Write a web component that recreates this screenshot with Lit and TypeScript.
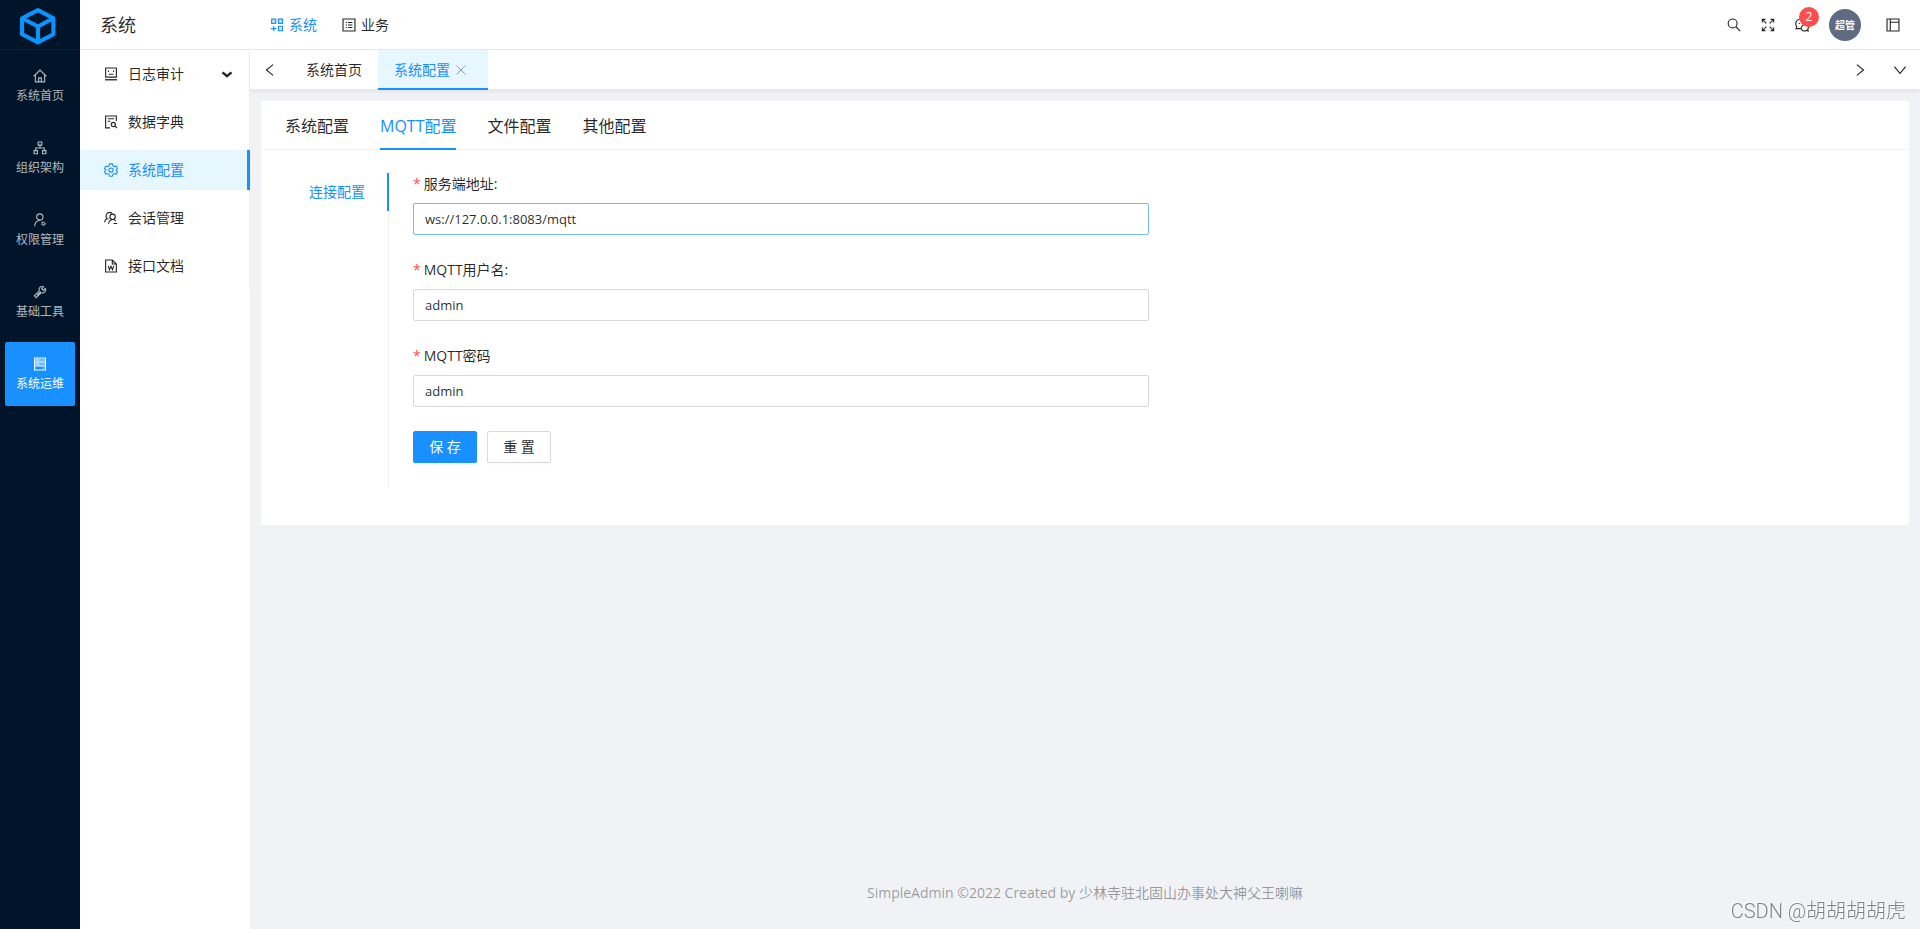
import { LitElement, html, css, svg } from "lit";
import { customElement, property } from "lit/decorators.js";

type Shape = ReturnType<typeof svg>;

// Glyphs live on a 1024 grid, stroked unless a part sets its own fill.
const shapes: Record<string, Shape> = {
  home: svg`<path d="M90 530L512 110l422 420M200 430v474h624V430M420 904V640h184v264"/>`,
  cluster: svg`<path d="M390 110h244v210H390zM110 690h230v210H110zM684 690h230v210H684zM512 320v190M225 690V510h574v180"/>`,
  userSetting: svg`<circle cx="500" cy="310" r="210"/><path d="M150 930c10-210 140-370 350-400"/><circle cx="740" cy="760" r="100" stroke-width="110" stroke-dasharray="70 35"/>`,
  tool: svg`<path d="M865 275L740 400l-115-115 125-125c-120-60-280 20-300 160-5 45 0 80 15 115L130 770l125 125 335-335c150 60 330-60 310-210-3-30-15-55-35-75zM310 740L560 490"/>`,
  server: svg`<path d="M150 110h724v804H150zM150 375h724M150 650h724"/><path d="M190 150h644v190H190zM190 415h644v200H190z" fill="currentColor" fill-opacity=".4" stroke="none"/><path d="M270 245h190M270 510h190M680 785h70"/>`,
  robot: svg`<path d="M150 110h724v610H150z"/><path d="M110 900h804" stroke-width="90"/><path d="M340 270v110M684 270v110M350 530h324"/>`,
  fileSearch: svg`<path d="M450 910H150V110h724v330M290 290h440M290 460h180"/><circle cx="670" cy="680" r="140"/><path d="M770 780l150 150"/>`,
  setting: svg`<path d="M420 100h184l35 125 95 55 126-32 92 160-91 93v30l91 93-92 160-126-32-95 55-35 125H420l-35-125-95-55-126 32-92-160 91-93v-30l-91-93 92-160 126 32 95-55z"/><circle cx="512" cy="518" r="140"/>`,
  team: svg`<circle cx="620" cy="430" r="180"/><path d="M350 900c10-150 110-260 270-290M700 590l140 130M680 880h250M230 540C120 400 180 140 410 130c90 0 150 30 190 80M80 800c10-120 70-210 180-250l90 30"/>`,
  fileWord: svg`<path d="M600 110H150v804h724V380zM600 110v270h274"/><path d="M330 500l80 260 102-230 102 230 80-260"/>`,
  appAdd: svg`<path d="M150 120h280v280H150zM610 120h280v280H610zM610 600h280v300H610z" fill="currentColor" fill-opacity=".25"/><path d="M290 580v350M110 755h360"/>`,
  profile: svg`<path d="M110 110h804v804H110z"/><path d="M290 340h80M440 340h300M290 510h80M440 510h300M290 680h80M440 680h300"/>`,
  left: svg`<path d="M720 150L270 512l450 362"/>`,
  right: svg`<path d="M300 150l450 362-450 362"/>`,
  down: svg`<path d="M130 290l382 450 382-450"/>`,
  chevron: svg`<path d="M210 400l302 260 302-260" stroke-width="170"/>`,
  close: svg`<path d="M160 160l704 704M864 160L160 864"/>`,
  search: svg`<circle cx="420" cy="410" r="300"/><path d="M640 630l290 290"/>`,
  expand: svg`<path d="M400 400L150 150M130 340V130h210M624 400l250-250M684 130h210v210M400 624L150 874M130 684v210h210M624 624l250 250M894 684v210H684"/>`,
  message: svg`<path d="M450 740c-60 20-120 20-180 0l-160 30 40-150C10 380 140 120 430 110c230 0 380 150 400 350M330 370v80M530 370v80M450 740c40-160 150-270 300-260 170 10 240 190 150 310l30 120-130-30c-150 80-320 20-350-140z"/>`,
  layout: svg`<path d="M110 110h804v804H110zM330 110v804M330 330h584"/>`,
};

@customElement("app-icon")
export class AppIcon extends LitElement {
  static styles = css`
    :host { display: inline-flex; flex: none; }
    svg { width: var(--icon-size, 14px); height: var(--icon-size, 14px); display: block; }
  `;
  @property() name = "";
  render() {
    return html`<svg viewBox="40 40 944 944" fill="none" stroke="currentColor" stroke-width="76" aria-hidden="true">${shapes[this.name]}</svg>`;
  }
}

@customElement("app-root")
export class AppRoot extends LitElement {
  static styles = css`
    :host {
      display: block;
      font: 14px/22px "Open Sans", "Noto Sans CJK SC", sans-serif;
      color: rgba(0, 0, 0, 0.85);
      --blue: #1890ff;
      --pale: #e6f7ff;
      --line: #f0f0f0;
    }
    * { box-sizing: border-box; }
    a { color: inherit; text-decoration: none; }
    button { font: inherit; color: inherit; background: none; border: 0; padding: 0; cursor: pointer; display: inline-flex; align-items: center; justify-content: center; }
    .shell { display: flex; min-height: 100vh; }
    .rail { flex: none; width: 80px; background: #001529; color: rgba(255, 255, 255, 0.7); }
    .logo { height: 50px; display: flex; align-items: center; padding: 2px 0 0 19px; border-bottom: 1px solid #0d2135; }
    .logo svg { width: 38px; height: 38px; }
    .rail-list { display: flex; flex-direction: column; gap: 8px; padding: 4px 5px; }
    .rail-item { height: 64px; display: flex; flex-direction: column; align-items: center; justify-content: center; gap: 4px; padding-top: 2px; font-size: 12px; line-height: 18px; border-radius: 2px; }
    .rail-item.active { background: var(--blue); color: #fff; }
    .right { flex: 1; min-width: 0; display: flex; flex-direction: column; }
    .header { height: 50px; display: flex; align-items: center; background: #fff; border-bottom: 1px solid #e8e8e8; }
    .title { width: 170px; padding-left: 20px; font-size: 18px; line-height: 28px; font-weight: 400; margin: 0; }
    .top-menu { display: flex; gap: 25px; padding-left: 20px; flex: 1; }
    .top-menu a { display: flex; align-items: center; gap: 5px; }
    .active-text { color: var(--blue); }
    .tools { display: flex; align-items: center; gap: 20px; padding-right: 20px; }
    .bell { position: relative; }
    .badge { position: absolute; left: 4px; top: -11px; width: 20px; height: 20px; border-radius: 10px; background: #ff4d4f; color: #fff; font-size: 12px; line-height: 20px; text-align: center; }
    .avatar { width: 32px; height: 32px; border-radius: 50%; background: #5f6b80; color: #fff; font-size: 10px; line-height: 32px; font-weight: 700; text-align: center; }
    .avatar-box { display: flex; padding-right: 5px; }
    .below { flex: 1; display: flex; min-height: 0; }
    .side { flex: none; width: 170px; background: #fff; }
    .side-list { display: flex; flex-direction: column; gap: 8px; padding: 4px 0; border-right: 1px solid var(--line); }
    .side-list .side-item { height: 40px; display: flex; align-items: center; gap: 10px; padding: 0 15px 0 24px; }
    .side-item .label { flex: 1; }
    .side-item.active { background: var(--pale); color: var(--blue); border-right: 3px solid var(--blue); margin-right: -1px; }
    .main { flex: 1; min-width: 0; display: flex; flex-direction: column; background: #f0f2f5; }
    .tabs { height: 40px; display: flex; align-items: stretch; background: #fff; border-bottom: 1px solid #e8e8e8; box-shadow: 0 2px 4px rgba(0, 21, 41, 0.06); }
    .tabs .arrow { width: 40px; }
    .tab { display: flex; align-items: center; gap: 5px; padding: 0 16px; height: 40px; color: inherit; }
    .tab.active { background: var(--pale); color: var(--blue); border-bottom: 2px solid var(--blue); padding: 2px 21px 0 16px; }
    .tab .close { color: #8c9aa3; --icon-size: 12px; }
    .grow { flex: 1; }
    .card { margin: 11px; background: #fff; border-radius: 2px; padding-bottom: 38px; }
    .card-tabs { display: flex; gap: 31px; padding: 0 24px; border-bottom: 1px solid var(--line); font-size: 16px; line-height: 24px; }
    .card-tabs a { padding: 13px 0 0; height: 49px; margin-bottom: -1px; }
    .card-tabs .active { color: var(--blue); border-bottom: 2px solid var(--blue); }
    .panel { display: flex; padding: 23px 24px 0; }
    .v-tabs { display: flex; flex-direction: column; margin-right: -1px; }
    .v-tabs a { padding: 8px 22px 8px 24px; color: var(--blue); border-right: 2px solid var(--blue); position: relative; }
    .form { flex: 1; border-left: 1px solid var(--line); padding: 0 0 24px 24px; }
    .field { display: flex; flex-direction: column; gap: 8px; width: 50%; margin-bottom: 24px; }
    .field label { line-height: 22px; }
    .req { color: #ff4d4f; padding-right: 3px; }
    .field input { height: 32px; width: 100%; border: 1px solid #d9d9d9; border-radius: 2px; padding: 0 11px; font: inherit; font-size: 13px; color: inherit; outline: none; background: #fff; }
    .field input.hot { border-color: #74b9f2; }
    .actions { display: flex; gap: 10px; }
    .btn { width: 64px; height: 32px; border: 1px solid #d9d9d9; border-radius: 2px; box-shadow: 0 2px 0 rgba(0, 0, 0, 0.02); }
    .btn.primary { background: var(--blue); border-color: var(--blue); color: #fff; }
    .footer { margin-top: auto; padding: 24px 50px 25px; text-align: center; color: rgba(0, 0, 0, 0.38); }
    .mark { position: fixed; right: 14px; bottom: 4px; font: 20px/28px Roboto, "Noto Sans CJK SC", sans-serif; font-weight: 300; color: #808184; text-shadow: -1px -1px 0 #fff; }
  `;

  private rail = [
    ["home", "系统首页"], ["cluster", "组织架构"], ["userSetting", "权限管理"], ["tool", "基础工具"], ["server", "系统运维"],
  ];
  private side = [
    ["robot", "日志审计"], ["fileSearch", "数据字典"], ["setting", "系统配置"], ["team", "会话管理"], ["fileWord", "接口文档"],
  ];
  private fields = [
    ["url", "服务端地址:", "ws://127.0.0.1:8083/mqtt"], ["user", "MQTT用户名:", "admin"], ["pass", "MQTT密码", "admin"],
  ];

  render() {
    return html`
      <div class="shell">
        <nav class="rail" aria-label="模块">
          <div class="logo">
            <svg viewBox="0 0 37 37" fill="none" stroke="#0a94ff" stroke-width="4" stroke-linejoin="round" aria-hidden="true">
              <path d="M18.500 3L33.500 11v15.500L18.500 34.500 3 26.500V11zM3 11l15.500 8L33.500 11M18.500 19V34"/>
            </svg>
          </div>
          <div class="rail-list">
            ${this.rail.map(([icon, text], i) => html`<a href="#" class="rail-item ${i === 4 ? "active" : ""}"><app-icon name=${icon}></app-icon><span>${text}</span></a>`)}
          </div>
        </nav>
        <div class="right">
          <header class="header">
            <h1 class="title">系统</h1>
            <nav class="top-menu">
              <a href="#" class="active-text"><app-icon name="appAdd"></app-icon>系统</a>
              <a href="#"><app-icon name="profile"></app-icon>业务</a>
            </nav>
            <div class="tools">
              <button aria-label="搜索"><app-icon name="search"></app-icon></button>
              <button aria-label="全屏"><app-icon name="expand"></app-icon></button>
              <button class="bell" aria-label="消息"><app-icon name="message"></app-icon><span class="badge">2</span></button>
              <span class="avatar-box"><span class="avatar">超管</span></span>
              <button aria-label="布局"><app-icon name="layout"></app-icon></button>
            </div>
          </header>
          <div class="below">
            <aside class="side">
              <nav class="side-list">
                ${this.side.map(([icon, text], i) => html`<a href="#" class="side-item ${i === 2 ? "active" : ""}"><app-icon name=${icon}></app-icon><span class="label">${text}</span>${i === 0 ? html`<app-icon name="chevron"></app-icon>` : ""}</a>`)}
              </nav>
            </aside>
            <div class="main">
              <div class="tabs">
                <button class="arrow" aria-label="向左"><app-icon name="left"></app-icon></button>
                <a href="#" class="tab">系统首页</a>
                <div class="tab active"><a href="#">系统配置</a><button class="close" aria-label="关闭"><app-icon name="close"></app-icon></button></div>
                <span class="grow"></span>
                <button class="arrow" aria-label="向右"><app-icon name="right"></app-icon></button>
                <button class="arrow" aria-label="更多"><app-icon name="down"></app-icon></button>
              </div>
              <section class="card">
                <nav class="card-tabs">
                  <a href="#">系统配置</a><a href="#" class="active">MQTT配置</a><a href="#">文件配置</a><a href="#">其他配置</a>
                </nav>
                <div class="panel">
                  <nav class="v-tabs"><a href="#">连接配置</a></nav>
                  <form class="form">
                    ${this.fields.map(([id, text, value], i) => html`
                      <div class="field">
                        <label for=${id}><span class="req">*</span>${text}</label>
                        <input id=${id} class=${i === 0 ? "hot" : ""} .value=${value} />
                      </div>`)}
                    <div class="actions">
                      <button type="button" class="btn primary">保 存</button>
                      <button type="button" class="btn">重 置</button>
                    </div>
                  </form>
                </div>
              </section>
              <footer class="footer">SimpleAdmin ©2022 Created by 少林寺驻北固山办事处大神父王喇嘛</footer>
            </div>
          </div>
        </div>
      </div>
      <div class="mark">CSDN @胡胡胡胡虎</div>
    `;
  }
}
